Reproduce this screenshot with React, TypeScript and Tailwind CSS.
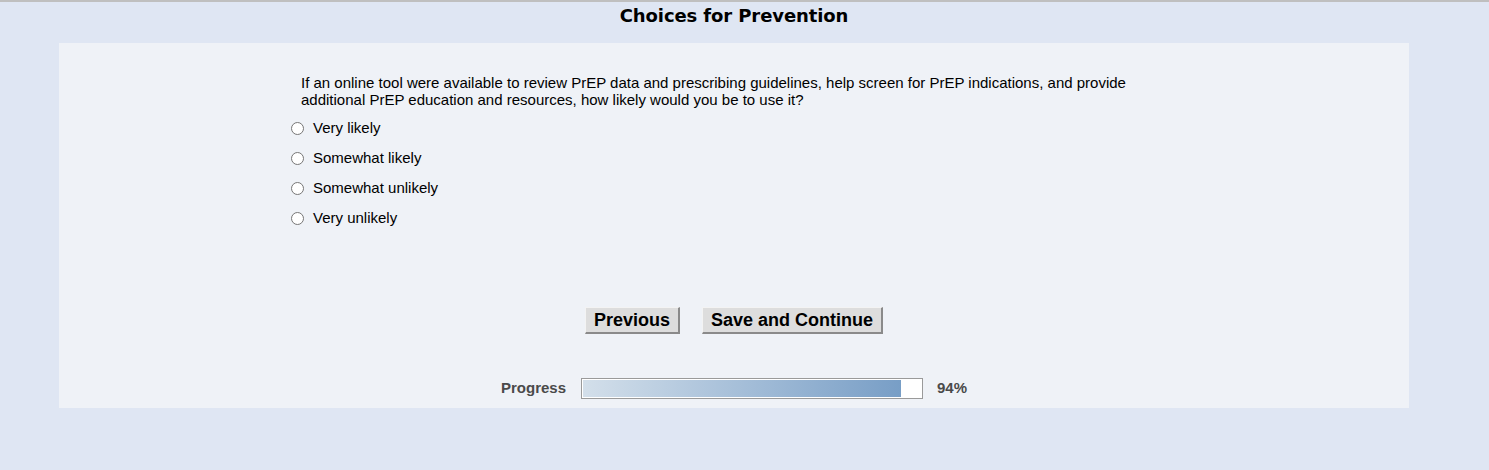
const options = ["Very likely", "Somewhat likely", "Somewhat unlikely", "Very unlikely"];

export default function App() {
  const progress = 94;

  return (
    <div className="min-h-[470px] bg-[#dfe6f3] border-t-2 border-[#bfbfbf] font-['Liberation_Sans',Arial,sans-serif] text-[15px] text-black">
      {/* Page title */}
      <div className="w-[1350px] ml-[59px] h-[41px] pt-[2px] text-center">
        <h1 className="font-['DejaVu_Sans',Verdana,sans-serif] font-bold text-[18px] leading-[24px] tracking-[-0.1px]">
          Choices for Prevention
        </h1>
      </div>

      {/* Survey panel */}
      <div className="w-[1350px] ml-[59px] bg-[#eff2f7] pt-[31px] pb-[8px]">
        <div className="pl-[232px]">
          <p className="pl-[10px] leading-[17px] max-w-[850px]">
            If an online tool were available to review PrEP data and prescribing guidelines, help screen for PrEP indications, and
            provide additional PrEP education and resources, how likely would you be to use it?
          </p>

          <div className="mt-[5px] flex flex-col">
            {options.map((opt) => (
              <label key={opt} className="h-[30px] flex items-center gap-[9px]">
                <span className="w-[13px] h-[13px] rounded-full border border-[#767676] bg-white" />
                <span className="leading-[17px] -mt-[2px]">{opt}</span>
              </label>
            ))}
          </div>
        </div>

        {/* Navigation buttons */}
        <div className="mt-[74px] flex justify-center gap-[22px]">
          <button className="h-[27px] px-[8px] bg-[#dddddd] border border-[#f3f3f3] border-r-[#8a8a8a] border-b-[#8a8a8a] border-r-2 border-b-2 font-bold text-[18px] leading-[22px]">
            Previous
          </button>
          <button className="h-[27px] px-[8px] bg-[#dddddd] border border-[#f3f3f3] border-r-[#8a8a8a] border-b-[#8a8a8a] border-r-2 border-b-2 font-bold text-[18px] leading-[22px]">
            Save and Continue
          </button>
        </div>

        {/* Progress */}
        <div className="mt-[43px] flex items-center justify-center gap-[14px] font-bold text-[#4a4a4a]">
          <span className="w-[66px]">Progress</span>
          <div className="w-[342px] h-[21px] border border-[#9a9a9a] bg-white p-[1px]">
            <div
              className="h-full bg-gradient-to-r from-[#d3dfea] to-[#789ec6]"
              style={{ width: `${progress}%` }}
            />
          </div>
          <span className="w-[30px]">{progress}%</span>
        </div>
      </div>
    </div>
  );
}
